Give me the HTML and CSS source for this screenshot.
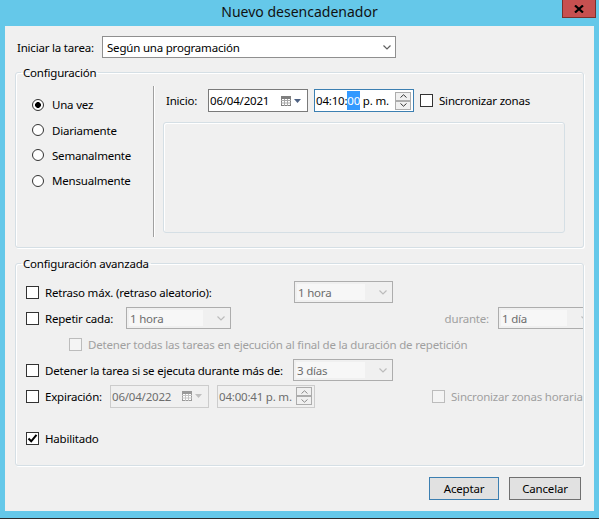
FILE: index.html
```html
<!DOCTYPE html>
<html lang="es">
<head>
<meta charset="utf-8">
<title>Nuevo desencadenador</title>
<link rel="stylesheet" href="styles.css">
</head>
<body>
<div class="window">
  <header class="titlebar">
    <div></div>
    <h1 class="title">Nuevo desencadenador</h1>
    <div class="close-wrap">
      <div class="close">
        <svg width="10" height="8" viewBox="0 0 10 8"><path d="M1 0.5L9 7.5M9 0.5L1 7.5" stroke="#000" stroke-width="2.2"/></svg>
      </div>
    </div>
  </header>
  <main class="client">
    <div class="start-row">
      <span class="start-label">Iniciar la tarea:</span>
      <div class="select">
        <span>Según una programación</span>
        <svg width="8" height="5" viewBox="0 0 8 5"><path d="M0.5 0.5L4 4L7.5 0.5" fill="none" stroke="#606060" stroke-width="1.2"/></svg>
      </div>
    </div>

    <fieldset class="group config">
      <legend>Configuración</legend>
      <div class="config-body">
        <div class="radios">
          <div class="radio-row"><span class="radio checked"></span><span>Una vez</span></div>
          <div class="radio-row"><span class="radio"></span><span>Diariamente</span></div>
          <div class="radio-row"><span class="radio"></span><span>Semanalmente</span></div>
          <div class="radio-row"><span class="radio"></span><span>Mensualmente</span></div>
        </div>
        <div class="sep"></div>
        <div class="schedule">
          <div class="inicio-row">
            <span class="inicio-label">Inicio:</span>
            <div class="date">
              <span>06/04/2021</span>
              <span class="date-icons">
                <svg width="10" height="10" viewBox="0 0 10 10"><rect x="0.5" y="0.5" width="9" height="9" fill="#fff" stroke="#7f7f7f"/><path d="M0 4.5H10M0 7H10M3.5 3V10M6.5 3V10" stroke="#a8a8a8"/><rect x="0" y="0" width="10" height="3" fill="#7f7f7f"/></svg>
                <svg class="tri" width="7" height="4" viewBox="0 0 7 4"><path d="M0 0H7L3.5 4Z" fill="#4d6182"/></svg>
              </span>
            </div>
            <div class="time focus">
              <span class="time-text">04:10:<span class="sel">00</span> p. m.</span>
              <span class="spin">
                <span class="spin-btn"><svg width="7" height="4" viewBox="0 0 7 4"><path d="M0.5 3.5L3.5 0.8L6.5 3.5" fill="none" stroke="#333" stroke-width="1"/></svg></span>
                <span class="spin-btn"><svg width="7" height="4" viewBox="0 0 7 4"><path d="M0.5 0.5L3.5 3.2L6.5 0.5" fill="none" stroke="#333" stroke-width="1"/></svg></span>
              </span>
            </div>
            <span class="cb sync-cb"></span>
            <span class="cb-text">Sincronizar zonas</span>
          </div>
          <div class="panel"></div>
        </div>
      </div>
    </fieldset>

    <fieldset class="group advanced">
      <legend>Configuración avanzada</legend>
      <div class="adv-body">
        <div class="row">
          <span class="cb"></span>
          <span class="lbl w-retraso">Retraso máx. (retraso aleatorio):</span>
          <div class="combo w-99"><span class="combo-in">1 hora</span><svg width="8" height="5" viewBox="0 0 8 5"><path d="M0.5 0.5L4 4L7.5 0.5" fill="none" stroke="#bcbcbc" stroke-width="1.2"/></svg></div>
        </div>
        <div class="row">
          <span class="cb"></span>
          <span class="lbl w-repetir">Repetir cada:</span>
          <div class="combo w-105"><span class="combo-in">1 hora</span><svg width="8" height="5" viewBox="0 0 8 5"><path d="M0.5 0.5L4 4L7.5 0.5" fill="none" stroke="#bcbcbc" stroke-width="1.2"/></svg></div>
          <span class="durante">durante:</span>
          <div class="combo w-97"><span class="combo-in">1 día</span><svg width="8" height="5" viewBox="0 0 8 5"><path d="M0.5 0.5L4 4L7.5 0.5" fill="none" stroke="#bcbcbc" stroke-width="1.2"/></svg></div>
        </div>
        <div class="row">
          <span class="cb disabled indent"></span>
          <span class="lbl dis">Detener todas las tareas en ejecución al final de la duración de repetición</span>
        </div>
        <div class="row">
          <span class="cb"></span>
          <span class="lbl w-detener">Detener la tarea si se ejecuta durante más de:</span>
          <div class="combo w-100"><span class="combo-in">3 días</span><svg width="8" height="5" viewBox="0 0 8 5"><path d="M0.5 0.5L4 4L7.5 0.5" fill="none" stroke="#bcbcbc" stroke-width="1.2"/></svg></div>
        </div>
        <div class="row">
          <span class="cb"></span>
          <span class="lbl w-exp">Expiración:</span>
          <div class="date dis-field w-99">
            <span>06/04/2022</span>
            <span class="date-icons">
              <svg width="10" height="10" viewBox="0 0 10 10"><rect x="0.5" y="0.5" width="9" height="9" fill="#fff" stroke="#9a9a9a"/><path d="M0 4.5H10M0 7H10M3.5 3V10M6.5 3V10" stroke="#c4c4c4"/><rect x="0" y="0" width="10" height="3" fill="#9a9a9a"/></svg>
              <svg class="tri" width="7" height="4" viewBox="0 0 7 4"><path d="M0 0H7L3.5 4Z" fill="#c0c0c0"/></svg>
            </span>
          </div>
          <div class="time dis-field w-98">
            <span class="time-text">04:00:41 p. m.</span>
            <span class="spin">
              <span class="spin-btn"><svg width="7" height="4" viewBox="0 0 7 4"><path d="M0.5 3.5L3.5 0.8L6.5 3.5" fill="none" stroke="#8a8a8a" stroke-width="1"/></svg></span>
              <span class="spin-btn"><svg width="7" height="4" viewBox="0 0 7 4"><path d="M0.5 0.5L3.5 3.2L6.5 0.5" fill="none" stroke="#8a8a8a" stroke-width="1"/></svg></span>
            </span>
          </div>
          <span class="cb disabled sync-dis"></span>
          <span class="lbl dis">Sincronizar zonas horarias</span>
        </div>
        <div class="row enabled-row">
          <span class="cb checked">
            <svg width="11" height="11" viewBox="0 0 11 11"><path d="M1.5 5.5L4.2 8.3L9.5 1.8" fill="none" stroke="#000" stroke-width="2"/></svg>
          </span>
          <span class="lbl">Habilitado</span>
        </div>
      </div>
    </fieldset>

    <div class="buttons">
      <button class="btn default">Aceptar</button>
      <button class="btn cancel">Cancelar</button>
    </div>
  </main>
</div>
</body>
</html>
```
FILE: styles.css
```css
* { box-sizing: border-box; }

body {
  margin: 0;
  background: #65c8e9;
  font-family: "Noto Sans", "Liberation Sans", sans-serif;
  font-size: 11.5px;
  letter-spacing: -0.2px;
  color: #000;
}

.window {
  width: 599px;
  height: 519px;
  display: flex;
  flex-direction: column;
  border-bottom: 1px solid #2b2b2b;
}

.titlebar {
  height: 26px;
  display: grid;
  grid-template-columns: 1fr auto 1fr;
  align-items: start;
  flex: none;
}

.title {
  margin: 0;
  font-weight: normal;
  font-size: 14px;
  letter-spacing: 0;
  line-height: 24px;
  color: #111;
}

.close-wrap {
  display: flex;
  justify-content: flex-end;
  padding-right: 3px;
}

.close {
  width: 34px;
  height: 18px;
  background: #c75050;
  border: 1px solid #7a302c;
  border-top: none;
  display: flex;
  align-items: center;
  justify-content: center;
}

.client {
  margin-left: 5px;
  width: 589px;
  height: 485px;
  flex: none;
  background: #f0f0f0;
  padding: 0 10px;
  display: flex;
  flex-direction: column;
}

.start-row {
  margin-top: 10px;
  height: 22px;
  display: flex;
  align-items: center;
  flex: none;
}

.start-label {
  width: 87px;
  padding-left: 2px;
}

.select {
  width: 294px;
  height: 22px;
  background: #fff;
  border: 1px solid #8f8f8f;
  display: flex;
  align-items: center;
  justify-content: space-between;
  padding: 0 4px 0 4px;
}

.group {
  margin: 0;
  padding: 0;
  min-width: 0;
  border: 1px solid #d5dfe5;
  border-radius: 3px;
  box-shadow: inset 1px 1px 0 #fff, 1px 1px 0 #fff;
  flex: none;
}

.group legend {
  margin-left: 5px;
  padding: 0 2px;
  height: 15px;
  line-height: 15px;
}

.config { margin-top: 7px; }

.config-body {
  display: flex;
  height: 167px;
}

.radios {
  width: 137px;
  flex: none;
  padding-left: 16px;
  padding-top: 12px;
}

.radio-row {
  height: 25.4px;
  display: flex;
  align-items: center;
  gap: 8px;
}

.radio {
  width: 12px;
  height: 12px;
  border: 1px solid #333;
  border-radius: 50%;
  background: #fff;
  flex: none;
}

.radio.checked {
  background: radial-gradient(circle, #000 0 2.6px, #fff 3.2px);
}

.sep {
  width: 2px;
  flex: none;
  margin: 6px 0 10px;
  border-left: 1px solid #a0a0a0;
  background: #fff;
}

.schedule {
  flex: 1;
  padding-left: 8px;
}

.inicio-row {
  margin-top: 9px;
  height: 23px;
  display: flex;
  align-items: center;
  padding-left: 3px;
}

.inicio-label { width: 42px; flex: none; }

.date {
  width: 100px;
  height: 23px;
  flex: none;
  border: 1px solid #7a7a7a;
  background: #fff;
  display: flex;
  align-items: center;
  padding-left: 1px;
  white-space: nowrap;
}

.date-icons {
  margin-left: auto;
  padding-right: 6px;
  display: flex;
  align-items: center;
}

.date-icons .tri { margin-left: 3px; }

.time {
  margin-left: 6px;
  width: 100px;
  height: 23px;
  flex: none;
  border: 1px solid #7a7a7a;
  background: #fff;
  display: flex;
  align-items: center;
  padding-left: 1px;
  white-space: nowrap;
}

.time-text { white-space: nowrap; }

.time.focus { border-color: #3c7fb1; }

.sel {
  background: #3399ff;
  color: #fff;
  padding: 2px 0;
}

.spin {
  margin-left: auto;
  margin-right: 2px;
  display: flex;
  flex-direction: column;
}

.spin-btn {
  width: 16px;
  height: 9px;
  border: 1px solid #acacac;
  background: #f0f0f0;
  display: flex;
  align-items: center;
  justify-content: center;
}

.cb {
  width: 13px;
  height: 13px;
  flex: none;
  border: 1px solid #333;
  background: #fff;
  display: flex;
  align-items: center;
  justify-content: center;
}

.cb.disabled {
  border-color: #bcbcbc;
  background: #f4f4f4;
}

.sync-cb { margin-left: 6px; }

.cb-text { margin-left: 6px; white-space: nowrap; }

.panel {
  margin-top: 10px;
  width: 402px;
  height: 111px;
  border: 1px solid #d5dfe5;
  border-radius: 3px;
  box-shadow: inset 1px 1px 0 #fff;
}

.advanced { margin-top: 8px; }

.adv-body {
  padding: 8px 0 14px 10px;
  overflow: hidden;
}

.row {
  height: 26px;
  display: flex;
  align-items: center;
}

.row > * { flex: none; }

.lbl {
  margin-left: 6px;
  white-space: nowrap;
}

.dis { color: #a0a0a0; }

.w-retraso { width: 249px; }
.w-repetir { width: 81px; }
.w-detener { width: 248px; }
.w-exp { width: 65px; }

.combo {
  height: 22px;
  border: 1px solid #adadad;
  background: #f0f0f0;
  display: flex;
  align-items: center;
  justify-content: space-between;
  padding: 0 5px 0 2px;
  color: #6d6d6d;
}

.combo-in {
  flex: 1;
  align-self: stretch;
  display: flex;
  align-items: center;
  padding-left: 1px;
  margin: 2px 14px 2px 0;
  background: #f7f7f7;
}

.w-97 { width: 97px; }
.w-98 { width: 98px; }
.w-99 { width: 99px; }
.w-100 { width: 100px; }
.w-105 { width: 105px; }

.durante {
  width: 258px;
  text-align: right;
  color: #a0a0a0;
  margin-right: 9px;
}

.indent { margin-left: 43px; }

.dis-field {
  border-color: #cccccc;
  background: #f0f0f0;
  color: #6d6d6d;
}

.time.dis-field { margin-left: 8px; }

.sync-dis { margin-left: 117px; }

.enabled-row { margin-top: 16px; }

.cb.checked { background: #fff; }

.buttons {
  margin-top: 11px;
  display: flex;
  justify-content: flex-end;
  gap: 10px;
  padding-right: 3px;
}

.btn {
  height: 23px;
  padding: 0;
  font: inherit;
  letter-spacing: inherit;
  color: #000;
  background: #e1e1e1;
  border: 1px solid #707070;
}

.btn.default { width: 70px; border-color: #3c7fb1; }
.btn.cancel { width: 72px; }
```
